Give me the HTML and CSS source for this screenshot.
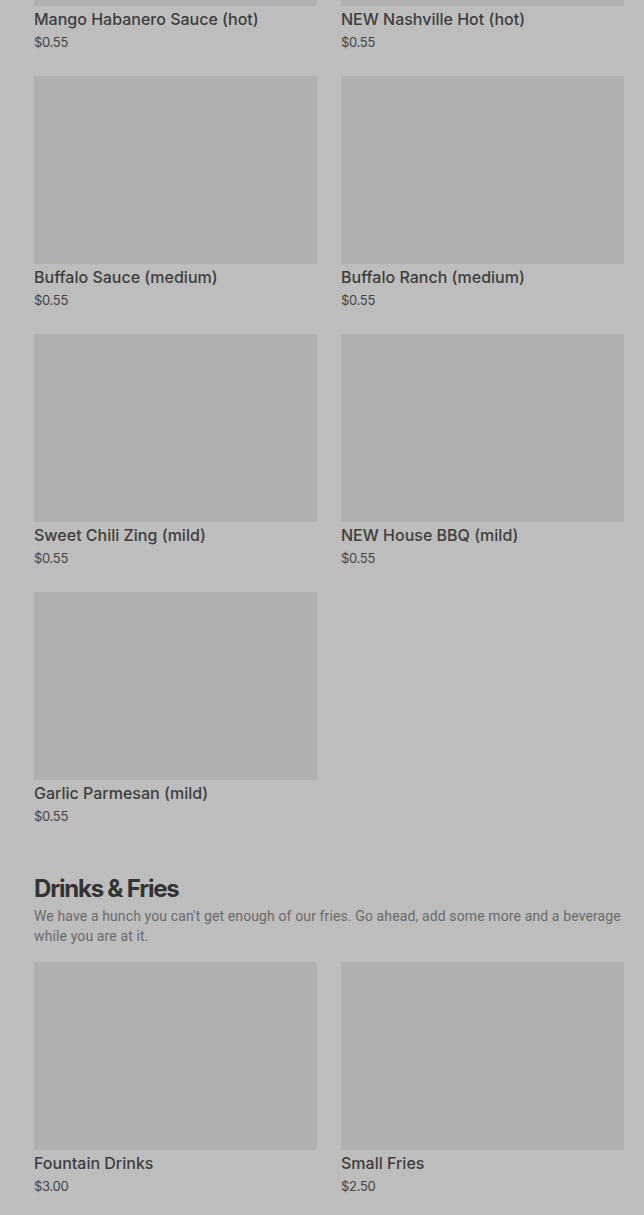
FILE: index.html
```html
<!DOCTYPE html>
<html>
<head>
<meta charset="utf-8">
<link rel="stylesheet" href="styles.css">
</head>
<body>
<main class="menu">
  <section class="section section-first">
    <div class="grid">
      <div class="card"><div class="thumb"></div><div class="name">Mango Habanero Sauce (hot)</div><div class="price">$0.55</div></div>
      <div class="card"><div class="thumb"></div><div class="name">NEW Nashville Hot (hot)</div><div class="price">$0.55</div></div>
      <div class="card"><div class="thumb"></div><div class="name">Buffalo Sauce (medium)</div><div class="price">$0.55</div></div>
      <div class="card"><div class="thumb"></div><div class="name">Buffalo Ranch (medium)</div><div class="price">$0.55</div></div>
      <div class="card"><div class="thumb"></div><div class="name">Sweet Chili Zing (mild)</div><div class="price">$0.55</div></div>
      <div class="card"><div class="thumb"></div><div class="name">NEW House BBQ (mild)</div><div class="price">$0.55</div></div>
      <div class="card"><div class="thumb"></div><div class="name">Garlic Parmesan (mild)</div><div class="price">$0.55</div></div>
    </div>
  </section>
  <section class="section">
    <h2 class="heading">Drinks &amp; Fries</h2>
    <p class="desc">We have a hunch you can't get enough of our fries. Go ahead, add some more and a beverage while you are at it.</p>
    <div class="grid">
      <div class="card"><div class="thumb"></div><div class="name">Fountain Drinks</div><div class="price">$3.00</div></div>
      <div class="card"><div class="thumb"></div><div class="name">Small Fries</div><div class="price">$2.50</div></div>
    </div>
  </section>
</main>
</body>
</html>
```
FILE: styles.css
```css
html, body {
  margin: 0;
  padding: 0;
  background: #bdbdbd;
  height: 1215px;
  overflow: hidden;
}
body {
  font-family: Inter, "Liberation Sans", sans-serif;
  color: #3b3b3b;
}
.menu {
  padding: 0 20px 0 34px;
}
.section-first {
  margin-top: -182px;
}
.grid {
  display: grid;
  grid-template-columns: 283px 283px;
  column-gap: 24px;
  row-gap: 22px;
}
.thumb {
  height: 188px;
  background: #b0b0b0;
}
.name {
  padding-top: 1px;
  font-size: 16px;
  line-height: 24px;
  font-weight: 500;
  color: #3d3d3d;
}
.price {
  font-size: 13px;
  line-height: 23px;
  letter-spacing: -0.3px;
  color: #444;
}
.section + .section {
  margin-top: 45px;
}
.heading {
  margin: 0;
  font-size: 24px;
  line-height: 32px;
  font-weight: 700;
  letter-spacing: -1.2px;
  color: #333;
}
.desc {
  margin: 1px 0 16px;
  font-family: Roboto, "Liberation Sans", sans-serif;
  font-size: 14px;
  line-height: 20px;
  letter-spacing: 0.12px;
  color: #6a6a6a;
}
```
